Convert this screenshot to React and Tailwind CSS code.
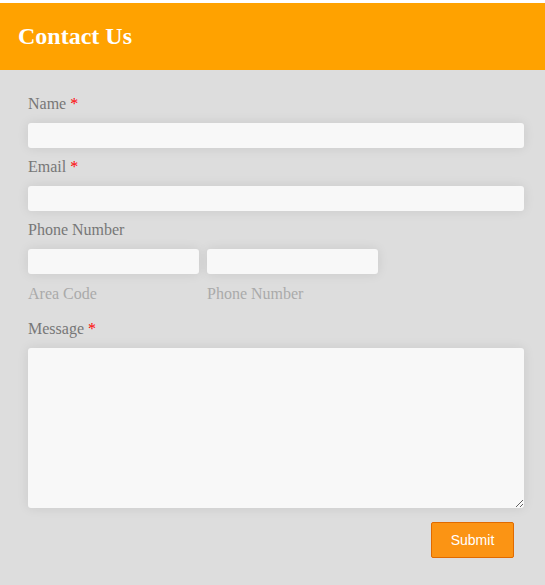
import React from "react";

const serif = { fontFamily: '"Liberation Serif", "Times New Roman", serif' };

function Label({ children, required }) {
  return (
    <div className="h-[21px] pt-[1px] leading-[20px] text-[16px] text-[#777777] mb-[9px]">
      {children}
      {required && <span className="text-[#ff0000]"> *</span>}
    </div>
  );
}

const inputCls =
  "block h-[25px] bg-[#f8f8f8] rounded-[3px] border-0 outline-none shadow-[0_0_12px_rgba(0,0,0,0.09)]";

export default function App() {
  return (
    <div className="min-h-screen bg-white pt-[3px]" style={serif}>
      <div className="min-h-[582px] bg-[#dddddd] flex flex-col">
        <div className="h-[67px] bg-[#ffa200] flex items-center pl-[18px]">
          <h1 className="text-[24px] font-bold text-white leading-none pb-[2px]">Contact Us</h1>
        </div>
        <form className="pl-[28px] pr-[21px] pt-[23px] flex flex-col" onSubmit={(e) => e.preventDefault()}>
          <Label required>Name</Label>
          <input className={`${inputCls} w-full`} />
          <div className="h-[8px]" />
          <Label required>Email</Label>
          <input className={`${inputCls} w-full`} />
          <div className="h-[8px]" />
          <Label>Phone Number</Label>
          <div className="flex gap-[8px]">
            <div className="w-[171px]">
              <input className={`${inputCls} w-full`} />
              <div className="mt-[9px] h-[20px] pt-[1px] leading-[20px] text-[16px] text-[#aaaaaa]">Area Code</div>
            </div>
            <div className="w-[171px]">
              <input className={`${inputCls} w-full`} />
              <div className="mt-[9px] h-[20px] pt-[1px] leading-[20px] text-[16px] text-[#aaaaaa]">Phone Number</div>
            </div>
          </div>
          <div className="h-[15px]" />
          <Label required>Message</Label>
          <textarea className={`${inputCls} w-full h-[160px] resize-y`} />
          <div className="flex justify-end pr-[10px] mt-[14px]">
            <button
              type="submit"
              className="w-[83px] h-[36px] bg-[#fb9414] border border-[#e06a00] rounded-[2px] text-white text-[14px]"
              style={{ fontFamily: '"Liberation Sans", Arial, sans-serif' }}
            >
              Submit
            </button>
          </div>
        </form>
      </div>
    </div>
  );
}
